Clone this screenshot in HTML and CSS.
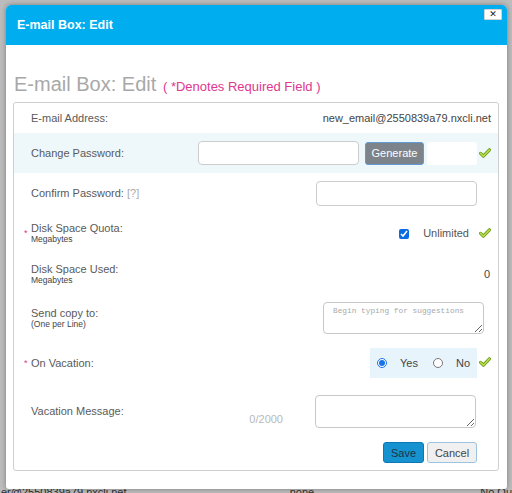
FILE: index.html
```html
<!DOCTYPE html>
<html>
<head>
<meta charset="utf-8">
<title>E-mail Box: Edit</title>
<link rel="stylesheet" href="styles.css">
</head>
<body>
<div class="page">
  <div class="page-row"><span class="c1">er@2550839a79.nxcli.net</span><span class="c2">none</span><span class="c3">No Qu</span></div>
</div>
<div class="modal">
  <div class="modal-header">
    <span class="modal-title">E-mail Box: Edit</span>
    <button class="close" type="button">&#x2715;</button>
  </div>
  <div class="modal-body">
    <h2 class="sub"><span class="sub-main">E-mail Box: Edit</span> <span class="req-note">( *Denotes Required Field )</span></h2>
    <div class="fieldset">
      <div class="row r1">
        <div class="label"><span class="star"></span><span class="lt">E-mail Address:</span></div>
        <div class="value email">new_email@2550839a79.nxcli.net</div>
      </div>
      <div class="row r2 hl">
        <div class="label"><span class="star"></span><span class="lt">Change Password:</span></div>
        <div class="ctrls">
          <input class="inp pw" type="password">
          <button class="gen" type="button">Generate</button>
          <span class="blank"></span>
          <svg class="ok" width="12" height="10" viewBox="0 0 12 10"><path d="M1.6 5.4 L4.4 8.2 L10.4 1.8" fill="none" stroke="#6f9d1c" stroke-width="3.2" stroke-linecap="round" stroke-linejoin="round"/><path d="M1.6 5.4 L4.4 8.2 L10.4 1.8" fill="none" stroke="#b9e04c" stroke-width="1.5" stroke-linecap="round" stroke-linejoin="round"/></svg>
        </div>
      </div>
      <div class="row r3">
        <div class="label"><span class="star"></span><span class="lt">Confirm Password: <span class="q">[?]</span></span></div>
        <input class="inp cpw" type="password">
      </div>
      <div class="row r4">
        <div class="label"><span class="star">*</span><span class="lt">Disk Space Quota:<span class="hint">Megabytes</span></span></div>
        <div class="ctrls">
          <input class="cb" type="checkbox" checked>
          <span class="unl">Unlimited</span>
          <svg class="ok" width="12" height="10" viewBox="0 0 12 10"><path d="M1.6 5.4 L4.4 8.2 L10.4 1.8" fill="none" stroke="#6f9d1c" stroke-width="3.2" stroke-linecap="round" stroke-linejoin="round"/><path d="M1.6 5.4 L4.4 8.2 L10.4 1.8" fill="none" stroke="#b9e04c" stroke-width="1.5" stroke-linecap="round" stroke-linejoin="round"/></svg>
        </div>
      </div>
      <div class="row r5">
        <div class="label"><span class="star"></span><span class="lt">Disk Space Used:<span class="hint">Megabytes</span></span></div>
        <div class="value zero">0</div>
      </div>
      <div class="row r6">
        <div class="label"><span class="star"></span><span class="lt">Send copy to:<span class="hint">(One per Line)</span></span></div>
        <textarea class="ta copy" placeholder="Begin typing for suggestions"></textarea>
      </div>
      <div class="row r7">
        <div class="label"><span class="star">*</span><span class="lt">On Vacation:</span></div>
        <div class="ctrls">
          <div class="radios">
            <input class="rb" type="radio" name="vac" checked>
            <span class="rl yes">Yes</span>
            <input class="rb" type="radio" name="vac">
            <span class="rl">No</span>
          </div>
          <svg class="ok" width="12" height="10" viewBox="0 0 12 10"><path d="M1.6 5.4 L4.4 8.2 L10.4 1.8" fill="none" stroke="#6f9d1c" stroke-width="3.2" stroke-linecap="round" stroke-linejoin="round"/><path d="M1.6 5.4 L4.4 8.2 L10.4 1.8" fill="none" stroke="#b9e04c" stroke-width="1.5" stroke-linecap="round" stroke-linejoin="round"/></svg>
        </div>
      </div>
      <div class="row r8">
        <div class="label"><span class="star"></span><span class="lt">Vacation Message:</span></div>
        <div class="ctrls">
          <span class="count">0/2000</span>
          <textarea class="ta msg"></textarea>
        </div>
      </div>
      <div class="row r9">
        <div class="ctrls btns">
          <button class="save" type="button">Save</button>
          <button class="cancel" type="button">Cancel</button>
        </div>
      </div>
    </div>
  </div>
</div>
</body>
</html>
```

FILE: styles.css
```css
* { box-sizing: border-box; }
html, body { margin: 0; padding: 0; }
body {
  width: 512px;
  height: 493px;
  overflow: hidden;
  position: relative;
  background: #bcbcbc;
  font-family: "Liberation Sans", Arial, sans-serif;
}

/* page under the overlay */
.page { height: 493px; padding-top: 486px; }
.page-row { display: flex; font-size: 11px; line-height: 12px; color: #2f2f2f; white-space: nowrap; }
.page-row .c1 { width: 292px; padding-left: 1px; }
.page-row .c2 { width: 192px; }

/* modal */
.modal {
  position: absolute;
  left: 6px;
  top: 5px;
  width: 501px;
  height: 484px;
  background: #fff;
  border-radius: 5px 5px 3px 3px;
  box-shadow: 0 0 5px rgba(0, 0, 0, 0.35);
  overflow: hidden;
}
.modal-header {
  height: 40px;
  background: #00aeef;
  display: flex;
  justify-content: space-between;
  align-items: center;
  padding: 0 5px 0 11px;
}
.modal-title { color: #fff; font-weight: bold; font-size: 12.5px; }
.close {
  align-self: flex-start;
  margin-top: 4px;
  width: 18px;
  height: 11px;
  padding: 0;
  background: #fff;
  border: 1px solid #d4d4d4;
  border-radius: 1px;
  color: #222;
  font-size: 9px;
  font-weight: bold;
  line-height: 9px;
  display: flex;
  align-items: center;
  justify-content: center;
  font-family: "DejaVu Sans", sans-serif;
}

.modal-body { padding: 0 8px 0 7px; }
.sub {
  margin: 26px 0 7px 1px;
  height: 24px;
  line-height: 24px;
  font-weight: normal;
  white-space: nowrap;
}
.sub-main { font-size: 20px; color: #a8a8a8; }
.req-note { font-size: 13px; color: #e0378f; }

.fieldset {
  border: 1px solid #cfcfcf;
  border-radius: 3px;
  height: 369px;
}

.row {
  display: flex;
  align-items: center;
  padding: 0 7px 0 10px;
  font-size: 11px;
  color: #5a5a5a;
}
.r1 { height: 30px; }
.r2 { height: 40px; }
.r3 { height: 40px; }
.r4 { height: 40px; }
.r5 { height: 42px; }
.r6 { height: 45px; }
.r7 { height: 46px; }
.r8 { height: 50px; }
.r9 { height: 34px; align-items: flex-start; padding-top: 6px; }
.hl { background: #eef7fa; }

.label { display: flex; align-items: center; }
.star { width: 7px; color: #e0378f; font-size: 9px; line-height: 9px; }
.lt { line-height: 12px; }
.q { color: #aaa; }
.hint { display: block; font-size: 8.5px; line-height: 10px; color: #444; }

.value { margin-left: auto; color: #444; }
.ctrls { margin-left: auto; display: flex; align-items: center; }

.inp {
  display: block;
  width: 161px;
  border: 1px solid #ccc;
  border-radius: 4px;
  background: #fff;
  margin: 0;
}
.pw { height: 24px; }
.cpw { height: 25px; margin-left: auto; margin-right: 14px; }

.gen {
  width: 59px;
  height: 23px;
  margin-left: 6px;
  padding: 0;
  background: #7c838a;
  border: 1px solid #5f9ad3;
  border-radius: 3px;
  color: #fff;
  font-family: "Liberation Sans", Arial, sans-serif;
  font-size: 11px;
}
.blank {
  width: 50px;
  height: 23px;
  margin-left: 3px;
  background: #fff;
  border-radius: 3px;
}
.ok { display: block; margin-left: 2px; }

.cb {
  width: 10px;
  height: 10px;
  margin: 2px 0 0 0;
  accent-color: #0b6be0;
}
.unl { margin-left: 14px; margin-right: 8px; color: #555; }

.zero { margin-right: 1px; }

.ta {
  display: block;
  width: 161px;
  border: 1px solid #c8c8c8;
  border-radius: 4px;
  margin: 0;
  padding: 4px 9px;
  font-family: "Liberation Mono", monospace;
  font-size: 7.8px;
  resize: both;
}
.ta::placeholder { color: #a9a9a9; }
.copy { height: 32px; margin-left: auto; margin-right: 7px; }
.msg { height: 33px; margin-right: 15px; }

.radios {
  width: 107px;
  height: 30px;
  background: #e8f4fc;
  display: flex;
  align-items: center;
  padding-left: 7px;
}
.rb { width: 10px; height: 10px; margin: 0; accent-color: #1a73e8; }
.rl { font-size: 11px; color: #444; margin-left: 13px; margin-right: 15px; }
.r7 .ok { margin-left: 2px; margin-top: -3px; }

.count { color: #b8b8b8; font-size: 11px; margin-right: 32px; margin-top: 16px; }

.btns { margin-right: 14px; }
.save, .cancel {
  height: 21px;
  padding: 0;
  border-radius: 3px;
  font-family: "Liberation Sans", Arial, sans-serif;
  font-size: 11px;
}
.save { width: 41px; background: #1592cf; border: 1px solid #0c79b5; color: #1f3448; }
.cancel { width: 50px; margin-left: 3px; background: #f0f0f0; border: 1px solid #9cc3e2; color: #444; }
```
